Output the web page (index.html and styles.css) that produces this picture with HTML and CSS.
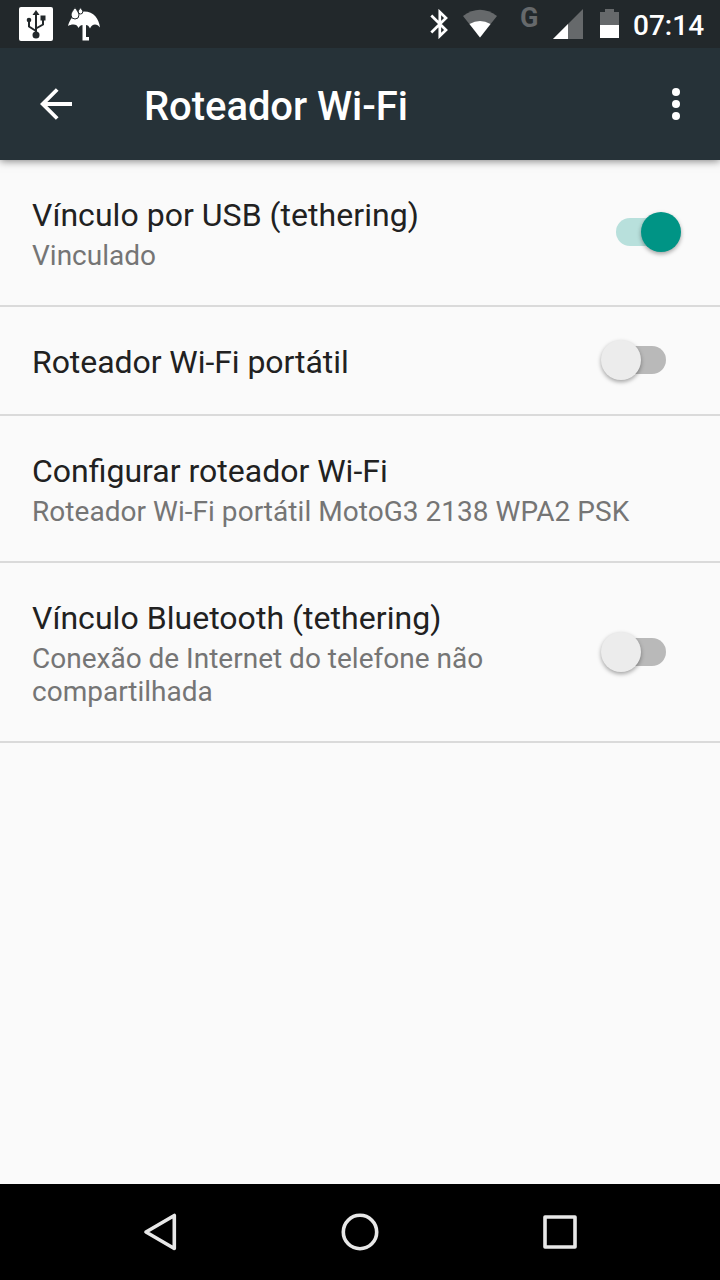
FILE: index.html
```html
<!DOCTYPE html>
<html lang="pt-BR">
<head>
<meta charset="utf-8">
<title>Roteador Wi-Fi</title>
<link rel="stylesheet" href="styles.css">
</head>
<body>
<div class="screen">
  <header class="status">
    <svg class="usb" width="34" height="34" viewBox="0 0 34 34">
      <rect width="34" height="34" rx="2" fill="#fff"/>
      <g fill="none" stroke="#22282b" stroke-width="2"><path d="M17 28V7M17 24l-7-4.500v-6M17 21.500l7-4V12"/></g>
      <g fill="#22282b"><path d="M17 3l3.500 5h-7z"/><circle cx="10" cy="13" r="2.300"/><rect x="21.500" y="8.500" width="5" height="5"/><circle cx="17" cy="28" r="3.500"/></g>
    </svg>
    <svg class="umbrella" width="34" height="34" viewBox="0 0 34 34">
      <path fill="#fff" d="M0 19C1 14 6 4.500 16 4.500S31 12 32 20.500C30.500 18.500 29 17.500 27 17.500S23 19 22 21.500C21 19 19.500 18 18 18V30h3v3.500H14.500V18C13 18 11.500 19 10.500 21 9.500 18.500 8 17.500 5.500 17.500S2 18 0 19z"/>
      <path fill="#fff" stroke="#22282b" stroke-width="1" d="M7 .5c2 3 4 5 4 7.500a4 4 0 0 1-8 0C3 5.500 5 3.500 7 .5zM12.500.500c1 2 2.300 2.800 2.300 4.200a2.300 2.300 0 0 1-4.600 0C10.200 3.300 11.500 2.500 12.500.500z"/>
    </svg>
    <svg class="bluetooth" width="18" height="30" viewBox="0 0 18 30">
      <path fill="none" stroke="#fff" stroke-width="2.700" d="M1.300 6.500L16 21l-6.200 6V3L16 9 1.300 23.500"/>
    </svg>
    <svg class="wifi" width="34" height="29" viewBox="0 0 34 29">
      <path fill="#66696b" d="M0 7Q17-5.500 34 7L17 28.500z"/>
      <path fill="#fff" d="M6.500 15Q17 9 27.500 15L17 28.500z"/>
    </svg>
    <span class="network">G</span>
    <svg class="signal" width="30" height="30" viewBox="0 0 30 30">
      <path fill="#66696b" d="M30 0v30H0z"/><path fill="#fff" d="M15 15v15H0z"/>
    </svg>
    <svg class="battery" width="19" height="29" viewBox="0 0 19 29">
      <path fill="#66696b" d="M0 3h5V0h9v3h5v13H0z"/><path fill="#fff" d="M0 16h19v13H0z"/>
    </svg>
    <span class="clock">07:14</span>
  </header>
  <div class="toolbar">
    <svg class="back" width="32" height="32" viewBox="0 0 32 32">
      <path fill="none" stroke="#fff" stroke-width="3.800" d="M32 16H3M17.200 1.500L2.700 16l14.500 14.500"/>
    </svg>
    <h1 class="heading">Roteador Wi-Fi</h1>
    <svg class="more" width="8" height="32" viewBox="0 0 8 32" fill="#fff">
      <circle cx="4" cy="4" r="4"/><circle cx="4" cy="16" r="4"/><circle cx="4" cy="28" r="4"/>
    </svg>
  </div>
  <main class="list">
    <div class="row row-two">
      <div class="text"><div class="title wide">Vínculo por USB (tethering)</div><div class="summary">Vinculado</div></div>
      <div class="switch on"><div class="thumb"></div></div>
    </div>
    <div class="row row-one">
      <div class="text"><div class="title narrow">Roteador Wi-Fi portátil</div></div>
      <div class="switch"><div class="thumb"></div></div>
    </div>
    <div class="row row-two">
      <div class="text"><div class="title">Configurar roteador Wi-Fi</div><div class="summary wide">Roteador Wi-Fi portátil MotoG3 2138 WPA2 PSK</div></div>
    </div>
    <div class="row row-three">
      <div class="text"><div class="title wide">Vínculo Bluetooth (tethering)</div><div class="summary">Conexão de Internet do telefone não compartilhada</div></div>
      <div class="switch"><div class="thumb"></div></div>
    </div>
  </main>
  <nav class="navbar">
    <svg width="40" height="40" viewBox="0 0 40 40"><path d="M34.300 3.500v33L6 20z"/></svg>
    <svg width="40" height="40" viewBox="0 0 40 40"><circle cx="20" cy="20" r="16.700"/></svg>
    <svg width="40" height="40" viewBox="0 0 40 40"><rect x="5" y="5" width="30" height="30"/></svg>
  </nav>
</div>
</body>
</html>
```
FILE: styles.css
```css
* { box-sizing: border-box; }
body { margin: 0; font-family: Roboto, "Noto Sans", sans-serif; }
svg { display: block; flex: none; }
.screen { width: 720px; height: 1280px; display: flex; flex-direction: column; background: #fafafa; overflow: hidden; }
.status { position: relative; z-index: 1; height: 48px; flex: none; display: flex; align-items: flex-start; padding-left: 19px; background: #22282b; color: #fff; }
.usb { margin-top: 7px; }
.umbrella { margin: 7px 0 0 15px; }
.bluetooth { margin: 9px 0 0 328px; }
.wifi { margin: 9px 0 0 15px; }
.network { width: 33px; margin: 2px 0 0 23px; font-size: 27px; line-height: 33px; font-weight: 700; color: #66696b; }
.signal { margin-top: 9px; }
.battery { margin: 9px 0 0 17px; }
.clock { margin: 9px 0 0 14px; font-size: 28px; line-height: 33px; font-weight: 500; white-space: nowrap; }
.toolbar { height: 112px; flex: none; display: flex; align-items: center; padding: 0 40px; background: #263238; color: #fff; box-shadow: 0 1px 8px rgba(0, 0, 0, .5); }
.heading { flex: 1; margin: 6px 0 0 72px; font-size: 40px; line-height: 48px; font-weight: 500; letter-spacing: -.06px; }
.list { flex: 1; }
.row { display: flex; align-items: center; justify-content: space-between; padding: 0 54px 0 32px; border-bottom: 2px solid #dadada; }
.row-two { height: 147px; padding-bottom: 1px; }
.row-one { height: 109px; padding-bottom: 1px; }
.row-three { height: 180px; }
.text { flex: 1; align-self: flex-start; padding-top: 36px; }
.title { font-size: 32px; line-height: 38px; color: #212121; white-space: nowrap; }
.summary { margin-top: 5px; font-size: 28px; line-height: 33px; color: #757575; }
.title.wide, .summary.wide { letter-spacing: .04px; }
.title.narrow { letter-spacing: -.06px; }
.switch { display: flex; width: 50px; height: 28px; flex: none; margin-left: 80px; border-radius: 14px; background: #b9b9b9; }
.thumb { flex: none; width: 40px; height: 40px; margin: -6px 0 0 -15px; border-radius: 50%; background: #ececec; box-shadow: 0 2px 4px rgba(0, 0, 0, .35); }
.switch.on { background: #b8e0dc; }
.switch.on .thumb { margin-left: 25px; background: #009485; }
.navbar { height: 96px; flex: none; display: flex; align-items: center; justify-content: center; gap: 160px; background: #000; }
.navbar svg { fill: none; stroke: #e8e8e8; stroke-width: 3.6; stroke-linejoin: round; }
```
